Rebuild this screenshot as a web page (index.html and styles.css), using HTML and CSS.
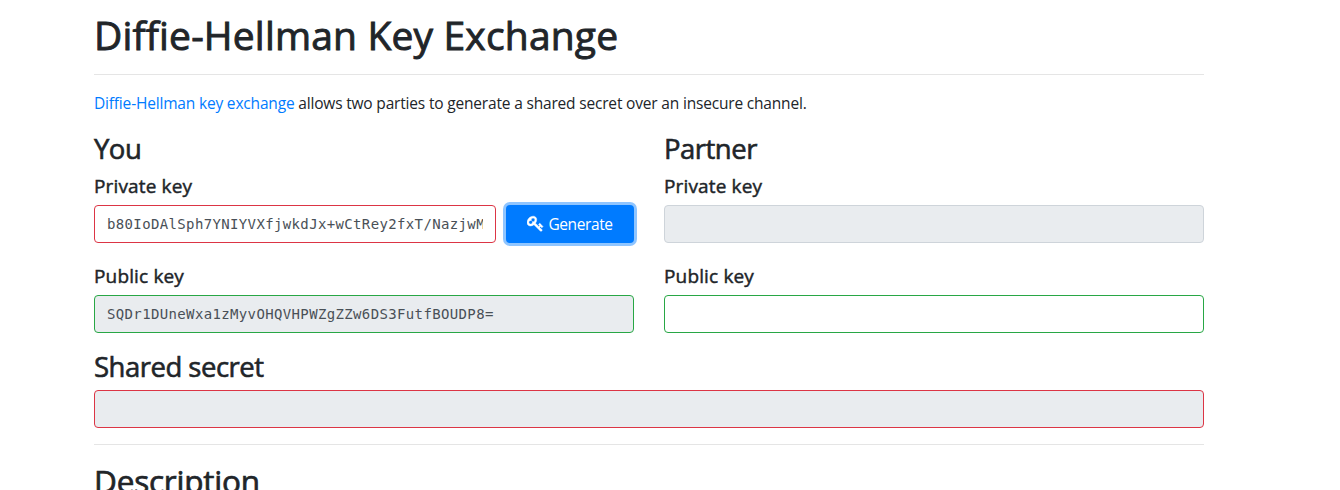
FILE: index.html
```html
<!DOCTYPE html>
<html lang="en">
<head>
<meta charset="utf-8">
<title>Diffie-Hellman Key Exchange</title>
<link rel="stylesheet" href="styles.css">
</head>
<body>
<main class="container">
  <h1 class="title">Diffie-Hellman Key Exchange</h1>
  <hr class="rule">
  <p class="lead"><a class="link" href="#">Diffie-Hellman key exchange</a> allows two parties to generate a shared secret over an insecure channel.</p>
  <div class="row">
    <section class="party">
      <h3 class="heading">You</h3>
      <h5 class="label">Private key</h5>
      <div class="group">
        <input class="field invalid" type="text" value="b80IoDAlSph7YNIYVXfjwkdJx+wCtRey2fxT/NazjwM=">
        <button class="button" type="button"><svg class="icon" viewBox="0 0 1792 1792"><path fill="currentColor" stroke="currentColor" stroke-width="50" d="M832 512q0-80-56-136t-136-56-136 56-56 136q0 42 19 83-41-19-83-19-80 0-136 56t-56 136 56 136 136 56 136-56 56-136q0-42-19-83 41 19 83 19 80 0 136-56t56-136zm851 704q0 17-49 66t-66 49q-9 0-28.500-16t-36.500-33-38.500-40-24.500-26l-96 96 220 220q28 28 28 68 0 42-39 81t-81 39q-40 0-68-28l-671-671q-176 131-365 131-163 0-265.500-102.500t-102.500-265.500q0-160 95-313t248-248 313-95q163 0 265.500 102.500t102.500 265.500q0 189-131 365l355 355 96-96q-3-3-26-24.500t-40-38.500-33-36.500-16-28.500q0-17 49-66t66-49q13 0 23 10 6 6 46 44.500t82 79.500 86.500 86 73 78 28.500 41z"/></svg><span>Generate</span></button>
      </div>
      <h5 class="label">Public key</h5>
      <input class="field readonly valid" type="text" value="SQDr1DUneWxa1zMyvOHQVHPWZgZZw6DS3FutfBOUDP8=" readonly>
    </section>
    <section class="party">
      <h3 class="heading">Partner</h3>
      <h5 class="label">Private key</h5>
      <div class="group">
        <input class="field readonly" type="text" readonly>
      </div>
      <h5 class="label">Public key</h5>
      <input class="field valid" type="text">
    </section>
  </div>
  <h3 class="heading secret">Shared secret</h3>
  <input class="field readonly invalid" type="text" readonly>
  <hr class="rule">
  <h2 class="subtitle">Description</h2>
</main>
</body>
</html>
```
FILE: styles.css
```css
* { box-sizing: border-box; }
body {
  margin: 0;
  height: 490px;
  overflow: hidden;
  background: #fff;
  color: #212529;
  font: 400 16px/24px "Open Sans", "Noto Sans", sans-serif;
}
.container { width: 1110px; margin-left: 94px; padding-top: 10px; }
h1, h2, h3, h5, p { margin: 0; white-space: nowrap; }
.title { padding-top: 2px; font-size: 39px; font-weight: 400; line-height: 46px; letter-spacing: .17px; -webkit-text-stroke: .9px currentColor; }
.rule { margin: 16px 0; border: 0; border-top: 1px solid rgba(0, 0, 0, .1); }
.lead { margin-bottom: 16px; font-size: 15.500px; letter-spacing: -.18px; }
.link { color: #007bff; text-decoration: none; }
.row { display: grid; grid-template-columns: 540px 540px; gap: 30px; }
.heading { margin-bottom: 7px; padding-top: 1px; font-size: 27.500px; font-weight: 400; line-height: 33.6px; letter-spacing: -.5px; -webkit-text-stroke: .6px currentColor; }
.label { margin-bottom: 7px; padding-top: 1px; font-size: 19px; font-weight: 400; line-height: 24px; letter-spacing: .15px; -webkit-text-stroke: .45px currentColor; }
.group { display: flex; gap: 10px; margin-bottom: 20px; }
.field {
  display: block;
  flex: 1;
  width: 100%;
  min-width: 0;
  height: 38px;
  padding: 6px 12px;
  border: 1px solid #ced4da;
  border-radius: 4px;
  background: #fff;
  color: #495057;
  font: 14px/24px "DejaVu Sans Mono", monospace;
  letter-spacing: .36px;
}
.readonly { background: #e9ecef; }
.invalid { border-color: #dc3545; }
.valid { border-color: #28a745; }
.button {
  display: flex;
  align-items: center;
  justify-content: center;
  gap: 4px;
  width: 128px;
  height: 38px;
  padding: 0;
  border: 0;
  border-radius: 4px;
  background: #007bff;
  box-shadow: 0 0 0 3px #8fc5ff;
  color: #fff;
  font: 400 15.500px/24px "Open Sans", "Noto Sans", sans-serif;
  letter-spacing: -.4px;
}
.icon { width: 17px; height: 17px; }
.secret { margin-top: 16px; }
.subtitle { padding-top: 1px; font-size: 31.500px; font-weight: 400; line-height: 38.4px; letter-spacing: -.2px; -webkit-text-stroke: .7px currentColor; }
```
